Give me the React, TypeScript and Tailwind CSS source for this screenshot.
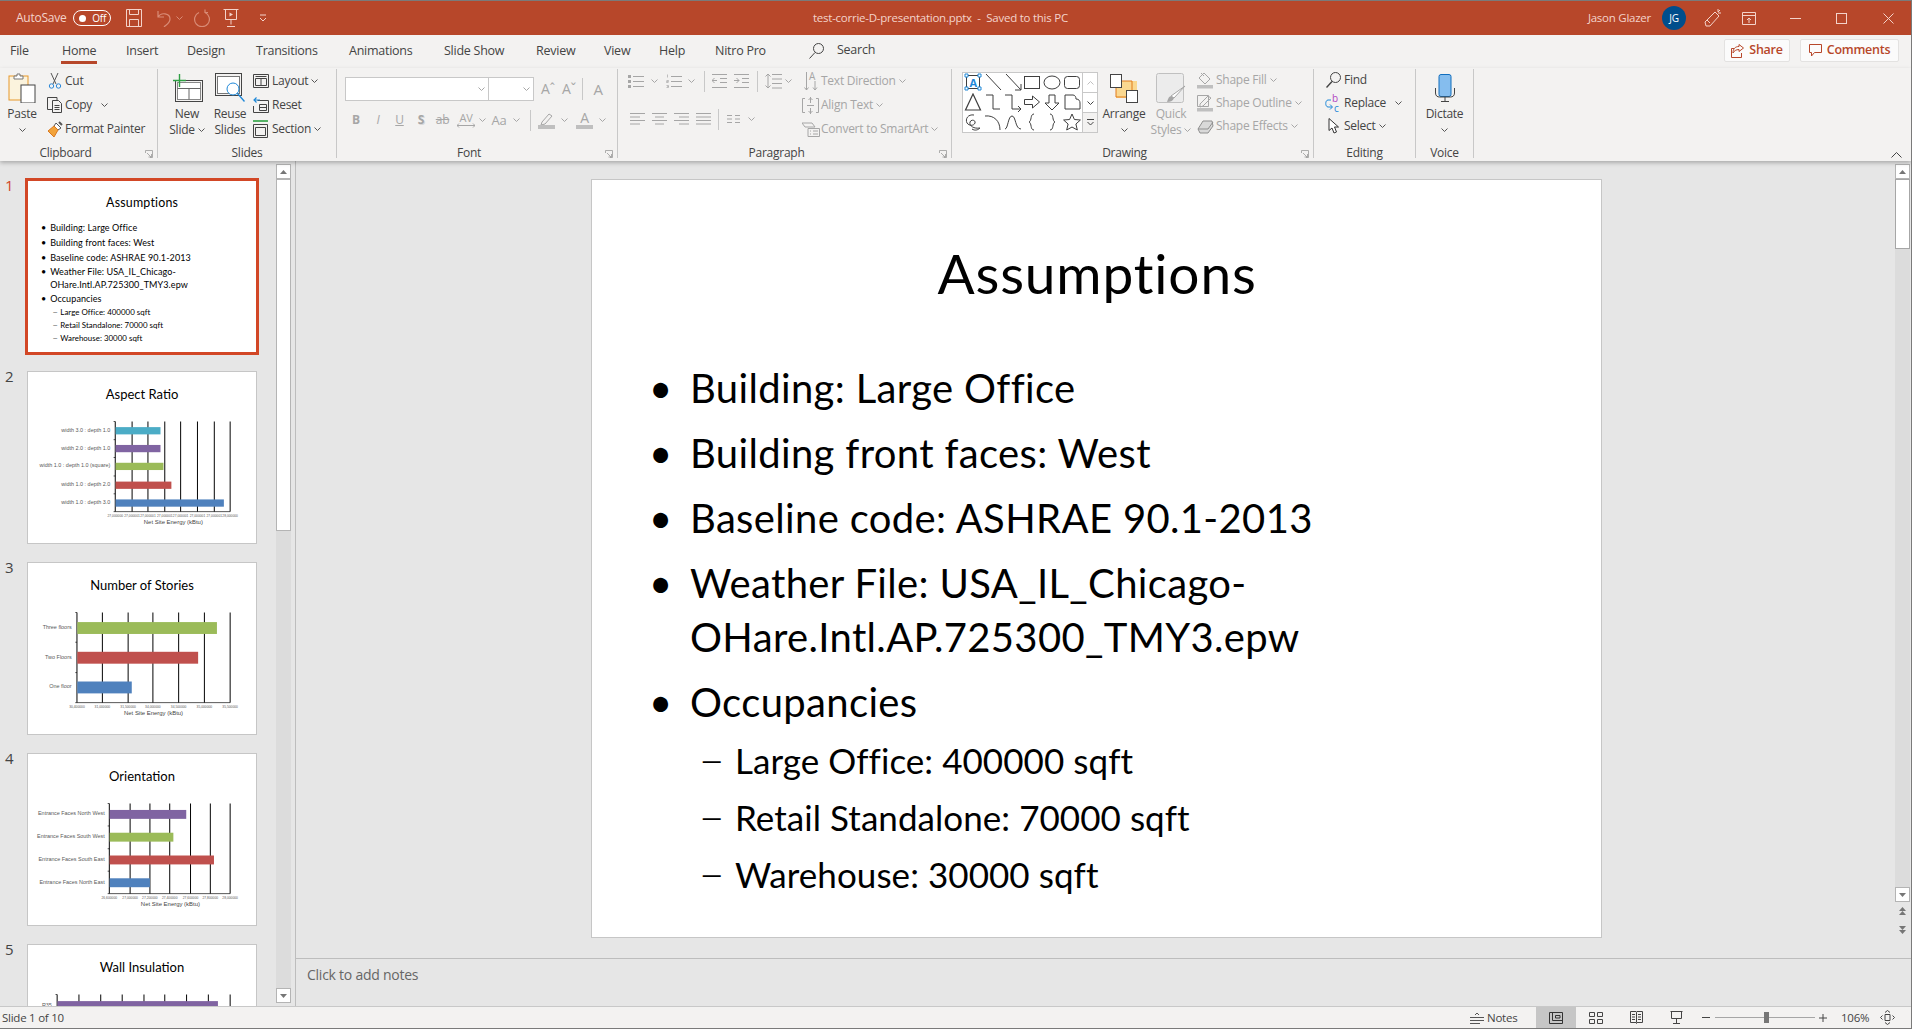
import React from 'react';

type P = { children?: React.ReactNode; className?: string };
const Ico = ({ w, h, children, className }: P & { w: number; h: number }) => (
  <svg width={w} height={h} viewBox={`0 0 ${w} ${h}`} fill="none" className={`block shrink-0 ${className ?? ''}`}>{children}</svg>
);
const D = '#a6a6a6';
const Chev = ({ c = '#555555', className }: { c?: string; className?: string }) => (
  <Ico w={7} h={4} className={className}><path d="M.5.5l3 3 3-3" stroke={c} /></Ico>
);
const Sep = ({ className }: P) => <div className={`w-px shrink-0 bg-[#c8c8c8] ${className ?? ''}`} />;

/* ---------- title bar icons ---------- */
const pale = '#f4d3ca';
const dim = '#d98c77';
const SaveIco = () => <Ico w={16} h={18}><path d="M.5.5h15v17H.5zM3.5.5v5h9v-5M3.5 17.5v-7h9v7" stroke={pale} /></Ico>;
const UndoIco = () => <Ico w={16} h={18}><path d="M3 2v6h6M3 8c3-5 12-4 12 2 0 4-4 6-6 8" stroke={dim} strokeWidth="1.2" /></Ico>;
const RedoIco = () => <Ico w={16} h={18}><path d="M5 3.5A7.4 7.4 0 1 0 11 3.5M11 .5v3h3" stroke={dim} strokeWidth="1.2" /></Ico>;
const ShowIco = () => <Ico w={16} h={18}><path d="M.5.5h15M2.5.5v10h11V.5M8 10.5v5M4 17.5h8" stroke={pale} /><path d="M6.5 3.5l3.5 2-3.5 2z" fill={pale} /></Ico>;
const QatIco = () => <Ico w={8} h={8}><path d="M1 1h6M1 4l3 3 3-3" stroke={pale} /></Ico>;
const PenIco = () => <Ico w={18} h={20}><path d="M11 4l4 4-9 10H2l-1-4zM3 12l3 3M14 1v3M17 5h-3M16 2l-2 2" stroke={pale} /></Ico>;
const DisplayIco = () => <Ico w={14} h={13}><path d="M.5.5h13v12H.5zM.5 3.5h13M7 11V6M5 8l2-2 2 2" stroke={pale} /></Ico>;

/* ---------- clipboard / slides ---------- */
const PasteIco = () => (
  <Ico w={28} h={30}>
    <rect x="1" y="3" width="19" height="24" fill="#fbf3dd" stroke="#e7982b" />
    <path d="M6 6V3h3V1h3v2h3v3z" fill="#fff" stroke="#777" />
    <rect x="13" y="12" width="14" height="18" fill="#fff" stroke="#444" />
  </Ico>
);
const CutIco = () => (
  <Ico w={14} h={16}>
    <path d="M3 0l5 11M10 0L5 11" stroke="#555" />
    <circle cx="3.5" cy="13" r="2.2" stroke="#2b88d8" /><circle cx="10.5" cy="13" r="2.2" stroke="#2b88d8" />
  </Ico>
);
const CopyIco = () => (
  <Ico w={16} h={16}>
    <path d="M10 3V.5H.5v12H5" stroke="#444" />
    <path d="M5.5 3.5h6l3 3v9h-9zM7.5 8.5h5M7.5 10.5h5M7.5 12.5h5" stroke="#444" />
  </Ico>
);
const BrushIco = () => (
  <Ico w={17} h={17}>
    <path d="M9 2l5 5-3 2-4-4z" fill="#fff" stroke="#555" />
    <path d="M12 1l3 3" stroke="#555" strokeWidth="2" />
    <path d="M7 5l4 4-4 7-6-6z" fill="#f2a33a" stroke="#d9781f" />
  </Ico>
);
const NewSlideIco = () => (
  <Ico w={31} h={28}>
    <rect x="3.5" y="6.5" width="27" height="21" stroke="#444" />
    <rect x="5.5" y="8.5" width="23" height="17" fill="#fff" stroke="#888" />
    <path d="M5.5 14.5h23M17 14.5v11" stroke="#666" />
    <path d="M7.5 0v13M1 6.5h13" stroke="#2ea043" strokeWidth="1.4" />
  </Ico>
);
const ReuseIco = () => (
  <Ico w={31} h={30}>
    <rect x=".5" y=".5" width="26" height="22" stroke="#444" />
    <rect x="2.5" y="3.5" width="22" height="17" fill="#fff" stroke="#777" />
    <circle cx="18" cy="16" r="6" fill="#fff" stroke="#1e88d8" />
    <path d="M22.5 20.5l7 8" stroke="#1e88d8" strokeWidth="1.4" />
  </Ico>
);
const LayoutIco = () => <Ico w={16} h={14}><path d="M.5.5h15v13H.5zM2.5 4.5h11v7h-11zM8 4.5v7M2.5 2.5h11" stroke="#444" /></Ico>;
const ResetIco = () => <Ico w={16} h={16}><path d="M4.5 3.5h11v12h-15V9M6.5 7.5h7v6h-7zM6 10.5h7" stroke="#444" /><path d="M7 3H1.5M3.5.5L1 3l2.5 2.5" stroke="#1e88d8" strokeWidth="1.2" /></Ico>;
const SectionIco = () => <Ico w={16} h={18}><path d="M0 1h15" stroke="#2ea043" strokeWidth="1.6" /><path d="M.5 4.5h14v13H.5zM2.5 7.5h10v8h-10z" stroke="#444" /></Ico>;

/* ---------- greyed font / paragraph ---------- */
const line = (ys: number[], x1: number, x2: number) => ys.map((y) => `M${x1} ${y}H${x2}`).join('');
const BulletIco = () => <Ico w={16} h={15}><path d={line([2.5, 7.5, 12.5], 5, 16)} stroke={D} /><path d="M0 1h3v3H0zM0 6h3v3H0zM0 11h3v3H0z" fill={D} /></Ico>;
const NumIco = () => (
  <Ico w={16} h={15}>
    <path d={line([2.5, 7.5, 12.5], 5, 16)} stroke={D} />
    <path d="M1.5 .5v3M.5 6.5h2v1h-2v1h2M.5 11.5h2v1h-1 1v1h-2" stroke={D} strokeWidth=".7" />
  </Ico>
);
const IndentDec = () => <Ico w={15} h={14}><path d="M0 .5h15M8 4.5h7M8 8.5h7M0 13.5h15M5 6.5H0M2.5 4L0 6.5 2.5 9" stroke={D} /></Ico>;
const IndentInc = () => <Ico w={15} h={14}><path d="M0 .5h15M8 4.5h7M8 8.5h7M0 13.5h15M0 6.5h5M2.5 4L5 6.5 2.5 9" stroke={D} /></Ico>;
const SpacingIco = () => <Ico w={17} h={16}><path d="M7 1.5h10M7 6h10M7 10.5h10M7 15h10M3 1v14M.5 3.5L3 1l2.5 2.5M.5 12.5L3 15l2.5-2.5" stroke={D} /></Ico>;
const AlignIco = ({ k }: { k: number }) => {
  const s = [
    'M0 1.5h15M0 5h10M0 8.5h15M0 12h10',
    'M0 1.5h15M3 5h9M0 8.5h15M3 12h9',
    'M0 1.5h15M5 5h10M0 8.5h15M5 12h10',
    'M0 1.5h15M0 5h15M0 8.5h15M0 12h15',
  ][k];
  return <Ico w={15} h={14}><path d={s} stroke={D} /></Ico>;
};
const ColsIco = () => <Ico w={13} h={10}><path d="M0 1.5h5M8 1.5h5M0 5h5M8 5h5M0 8.5h5M8 8.5h5" stroke={D} /></Ico>;
const TextDirIco = () => (
  <Ico w={14} h={20}>
    <text x="5" y="9" fontSize="10" fill={D} fontFamily="'Open Sans',sans-serif">A</text>
    <path d="M2.5 1v18M.5 16.5l2 2.5 2-2.5M11 10v9M9 16.5l2 2.5 2-2.5" stroke={D} />
  </Ico>
);
const AlignTextIco = () => <Ico w={17} h={17}><path d="M3 1.5H.5v14H3M14 1.5h2.5v14H14M8.5 0v6M6.5 3l2-2 2 2M8.5 17v-6M6.5 14l2 2 2-2M5 8.5h7" stroke={D} /></Ico>;
const SmartIco = () => <Ico w={18} h={15}><path d="M0 1h10l3 4H3zM6 6.5h11.5v8H6zM8 9h1M8 12h1M11 9h5M11 12h5" stroke={D} /></Ico>;

/* ---------- drawing ---------- */
const Shape = ({ k }: { k: number }) => {
  const st = '#3f3f3f';
  const items: React.ReactNode[] = [
    <g key="a">
      <rect x="2.5" y="2.5" width="13" height="13" stroke={st} />
      <path d="M1 1h3v3H1zM14 1h3v3h-3zM1 14h3v3H1zM14 14h3v3h-3z" fill="#fff" stroke="#1e88d8" />
      <text x="5.5" y="13.5" fontSize="11" fontWeight="700" fill="#1e88d8" fontFamily="'Open Sans',sans-serif">A</text>
    </g>,
    <path key="b" d="M2 1l15 16" stroke={st} />,
    <path key="c" d="M2 1l15 16M17 11v6h-6" stroke={st} />,
    <rect key="d" x="1.5" y="3.5" width="15" height="12" stroke={st} />,
    <ellipse key="e" cx="9" cy="9.5" rx="8" ry="6.5" stroke={st} />,
    <rect key="f" x="1.5" y="3.5" width="15" height="12" rx="3" stroke={st} />,
    <path key="g" d="M9 1L1.5 17h15z" stroke={st} strokeWidth="1.2" />,
    <path key="h" d="M2 2h7v14h7" stroke={st} />,
    <path key="i" d="M1 2h7v14h9M14 13l3 3-3 3" stroke={st} />,
    <path key="j" d="M1.5 6.5h8V3l7 6-7 6v-3.500h-8z" stroke={st} />,
    <path key="k" d="M6 2h6v8h4l-7 7-7-7h4z" stroke={st} />,
    <path key="l" d="M2 2h8c2 0 3 2 3 4 3 0 4 2 4 4v6H2z" stroke={st} />,
    <path key="m" d="M10 2C4 1 1 6 3 10c2 3 7 3 8 0 1-3-4-4-5-1-1 4 4 7 10 6-2 2-5 3-8 1" stroke={st} />,
    <path key="n" d="M1 3c9-1 15 5 15 14" stroke={st} />,
    <path key="o" d="M1 16c3 0 3-13 7-13s3 13 9 13" stroke={st} />,
    <path key="p" d="M11 1C7 1 9 8 6 9c3 1 1 8 5 8" stroke={st} />,
    <path key="q" d="M7 1c4 0 2 7 5 8-3 1-1 8-5 8" stroke={st} />,
    <path key="r" d="M9 1l2.400 5.500 6 .5-4.500 4 1.400 6L9 14l-5.300 3 1.400-6L.6 7l6-.5z" stroke={st} />,
  ];
  return <div className="flex items-center justify-center"><Ico w={18} h={19}>{items[k]}</Ico></div>;
};
const ArrangeIco = () => (
  <Ico w={29} h={29}>
    <path d="M6 7h21v17H6z" fill="#fad890" />
    <path d="M6 7h16v16" stroke="#e07b1a" />
    <path d="M6 7v16h16" stroke="#e07b1a" />
    <rect x=".5" y=".5" width="11" height="13" fill="#fff" stroke="#444" />
    <rect x="16.500" y="16.500" width="11" height="12" fill="#fff" stroke="#444" />
  </Ico>
);
const QuickIco = () => (
  <Ico w={30} h={31}>
    <rect x=".5" y=".5" width="27" height="29" rx="2" fill="#ececec" stroke="#c0c0c0" />
    <path d="M29 13L18 25l-3-2z" fill="#fff" stroke={D} />
    <path d="M15 23l3 2c-1 3-4 4-7 4 1-2 1-5 4-6z" fill={D} />
  </Ico>
);
const FillIco = () => <Ico w={17} h={17}><path d="M7 1l6 6-5 5-6-6zM4 1l3 3" stroke={D} /><path d="M0 13h16v3.500H0z" fill="#bfbfbf" /></Ico>;
const OutlineIco = () => <Ico w={17} h={17}><path d="M.5.5h11v11H.5zM3 9l8-8 3 2-8 8-3 1z" stroke={D} /><path d="M0 13h16v3.500H0z" fill="#bfbfbf" /></Ico>;
const EffectIco = () => <Ico w={17} h={15}><path d="M1 10l5-8h9l1 5-5 7H3z" fill="#d9d9d9" stroke="#8f8f8f" /><path d="M1 10h10l5-7" stroke="#8f8f8f" /></Ico>;

/* ---------- editing / voice ---------- */
const FindIco = () => <Ico w={15} h={16}><circle cx="9.500" cy="5.500" r="5" stroke="#444" /><path d="M6 9.500L.5 15.500" stroke="#444" strokeWidth="1.4" /></Ico>;
const ReplaceIco = () => (
  <Ico w={16} h={19}>
    <text x="7" y="8" fontSize="10" fill="#b146c2" fontFamily="'Open Sans',sans-serif">b</text>
    <text x="9" y="18" fontSize="10" fill="#1e88d8" fontFamily="'Open Sans',sans-serif">c</text>
    <path d="M6 6H3C0 6 0 13 3 13h4M5 10.500L7.500 13 5 15.500" stroke="#1e88d8" />
  </Ico>
);
const SelectIco = () => <Ico w={11} h={16}><path d="M1 .5v12l3-2.500 2 5 2.500-1-2-5h4z" fill="#fff" stroke="#333" /></Ico>;
const MicIco = () => (
  <Ico w={20} h={28}>
    <rect x="4" y=".5" width="12" height="22" rx="2" fill="#85bdee" stroke="#106ebe" />
    <path d="M.5 14v5c0 3 2 4 4 4h11c2 0 4-1 4-4v-5M10 23v4M6 27.500h8" stroke="#444" />
  </Ico>
);
const ShareIco = () => <Ico w={13} h={14}><path d="M8 .5l4.500 3.500L8 7.500V5.500C5 5.500 3 7 2 9 2 5 4 2.500 8 2.500zM10.500 9v4.500H.5v-9H3" stroke="#b7472a" /></Ico>;
const CommentIco = () => <Ico w={13} h={13}><path d="M.5.5h12v8H5.500L2.500 12V8.500h-2z" stroke="#b7472a" /></Ico>;
const SearchIco = () => <Ico w={15} h={16}><circle cx="9.500" cy="5.500" r="5" stroke="#444" /><path d="M6 9.500L.5 15.500" stroke="#444" /></Ico>;

/* ---------- ribbon pieces ---------- */
const Small = ({ icon, label, chev, off, iconW = 'w-[18px]', gap = 'ml-[1px]', h = 'h-[24px]', chevClass = 'ml-[3px]' }: {
  icon: React.ReactNode; label: string; chev?: boolean; off?: boolean; iconW?: string; gap?: string; h?: string; chevClass?: string;
}) => (
  <div className={`flex items-center ${h}`}>
    <div className={`flex justify-center shrink-0 ${iconW}`}>{icon}</div>
    <span className={`${gap} whitespace-nowrap ${off ? 'text-[#a6a6a6]' : 'text-[#444444]'}`}>{label}</span>
    {chev && <Chev c={off ? D : '#555555'} className={chevClass} />}
  </div>
);
const Large = ({ icon, l1, l2, w, off }: { icon: React.ReactNode; l1: string; l2?: string; w: string; off?: boolean }) => (
  <div className={`flex flex-col items-center shrink-0 mt-[1px] ${w} ${off ? 'text-[#a6a6a6]' : 'text-[#444444]'}`}>
    <div className="h-[36px] flex items-center justify-center">{icon}</div>
    <div className="leading-[16px] whitespace-nowrap">{l1}</div>
    <div className="leading-[16px] h-[16px] flex items-center gap-[3px] whitespace-nowrap">
      {l2}<Chev c={off ? D : '#555555'} />
    </div>
  </div>
);
const Launcher = () => (
  <Ico w={8} h={8} className="absolute right-[4px] bottom-0"><path d="M.5 3V.5H7.500V7.500H5M2 3l4 4M3.500 7H6.500V4" stroke="#9a9a9a" strokeWidth=".8" /></Ico>
);
const Group = ({ w, label, pr = '', launcher, children }: P & { w: string; label: string; pr?: string; launcher?: boolean }) => (
  <div className={`relative h-[89px] mt-[1px] border-r border-[#c8c8c8] shrink-0 flex flex-col ${w}`}>
    <div className="h-[76px] shrink-0 flex">{children}</div>
    <div className={`h-[16px] shrink-0 leading-[16px] text-center text-[#444444] ${pr}`}>{label}</div>
    {launcher && <Launcher />}
  </div>
);
const Glyph = ({ children, w, className }: P & { w: string }) => (
  <div className={`${w} shrink-0 text-center text-[#a6a6a6] leading-[20px] ${className ?? ''}`}>{children}</div>
);

/* ---------- slide 1 (main view and its thumbnail share one drawing) ---------- */
const B = ({ children, className = 'leading-[52px] mt-[13px]' }: P) => (
  <div className={`flex text-[40px] tracking-[0.35px] ${className}`}>
    <span className="w-[98px] pl-[57px] shrink-0">•</span><div>{children}</div>
  </div>
);
const Sub = ({ children, mt }: P & { mt: string }) => (
  <div className={`flex items-center leading-[44px] text-[35px] tracking-[0.05px] ml-[109px] ${mt}`}>
    <span className="w-[34px] shrink-0 text-[27px]">—</span><div>{children}</div>
  </div>
);
const SlideOne = () => (
  <div className="w-[1009px] h-[757px] bg-white text-black font-['Lato',sans-serif] overflow-hidden">
    <div className="text-center text-[55px] leading-[64px] tracking-[0.85px] pt-[61px] h-[169px] pl-[1px]">Assumptions</div>
    <B>Building: Large Office</B>
    <B>Building front faces: West</B>
    <B>Baseline code: ASHRAE 90.1-2013</B>
    <B className="leading-[54px] mt-[12px]">Weather File: USA_IL_Chicago-<br />OHare.Intl.AP.725300_TMY3.epw</B>
    <B className="leading-[52px] mt-[12px]">Occupancies</B>
    <Sub mt="mt-[10px]">Large Office: 400000 sqft</Sub>
    <Sub mt="mt-[13px]">Retail Standalone: 70000 sqft</Sub>
    <Sub mt="mt-[13px]">Warehouse: 30000 sqft</Sub>
  </div>
);

/* ---------- charts ---------- */
type Bar = { y: number; h: number; x2: number; c: string; label: string };
const Chart = ({ x0, grid, bars, ticks, nameX, bottom = 423, labelX, yticks }: {
  x0: number; grid: number[]; bars: Bar[]; ticks: string[]; nameX: number; bottom?: number; labelX: number; yticks: number[];
}) => (
  <svg viewBox="0 100 690 418" className="w-[228px] h-[138px] block" fontFamily="'Liberation Sans',sans-serif">
    {grid.map((x) => <line key={x} x1={x} x2={x} y1={150} y2={bottom} stroke="#000" strokeWidth="3" />)}
    <line x1={x0} x2={612} y1={bottom} y2={bottom} stroke="#000" strokeWidth="2" />
    {yticks.map((y) => <line key={y} x1={x0 - 5} x2={x0} y1={y} y2={y} stroke="#000" strokeWidth="2" />)}
    {bars.map((b) => (
      <g key={b.label}>
        <rect x={x0 + 1} y={b.y - b.h / 2} width={b.x2 - x0 - 1} height={b.h} fill={b.c} />
        <text x={labelX} y={b.y + 3} textAnchor="end" fontSize="16.5" fill="#595959" letterSpacing="0">{b.label}</text>
      </g>
    ))}
    {ticks.map((t, i) => <text key={i} x={grid[i] ?? x0} y={bottom + 17} textAnchor="middle" fontSize="10" fill="#595959" letterSpacing="0">{t}</text>)}
    <text x={nameX} y={bottom + 38} textAnchor="middle" fontSize="18" fill="#444" letterSpacing="0">Net Site Energy (kBtu)</text>
  </svg>
);
const blue = '#4f81bd', red = '#c0504d', green = '#9bbb59', purple = '#8064a2', teal = '#4bacc6';

const Thumb = ({ n, title, children, active }: P & { n: number; title?: string; active?: boolean }) => (
  <div className="flex h-[191px] pl-[5px] shrink-0">
    <div className={`w-[22px] text-[15px] leading-[15px] -mt-[2px] ${active ? 'text-[#d24726]' : 'text-[#444444]'}`}>{n}</div>
    <div className={`w-[230px] h-[173px] bg-white overflow-hidden border ${active ? 'border-[#d24726] ring-2 ring-[#d24726]' : 'border-[#c6c6c6]'}`}>
      {title && <div className="h-[33px] pt-[10px] text-center text-black text-[13px] tracking-normal leading-[24px] font-['Lato',sans-serif]">{title}</div>}
      {children}
    </div>
  </div>
);

const Tri = ({ up }: { up?: boolean }) => (
  <Ico w={7} h={4}><path d={up ? 'M3.500 0L7 4H0z' : 'M0 0h7L3.500 4z'} fill="#767676" /></Ico>
);
const ScrollBtn = ({ up }: { up?: boolean }) => (
  <div className="h-[15px] bg-white border border-[#b4b4b4] flex items-center justify-center shrink-0"><Tri up={up} /></div>
);

const tabs: [string, string][] = [
  ['File', 'w-[51px]'], ['Home', 'w-[65px]'], ['Insert', 'w-[61px]'], ['Design', 'w-[69px]'],
  ['Transitions', 'w-[93px]'], ['Animations', 'w-[95px]'], ['Slide Show', 'w-[92px]'], ['Review', 'w-[68px]'],
  ['View', 'w-[55px]'], ['Help', 'w-[56px]'], ['Nitro Pro', 'w-[94px]'],
];

export default function App() {
  return (
    <div className="w-[1912px] h-[1029px] flex flex-col overflow-hidden border-r border-[#7a7a7a] bg-[#e6e6e6] text-[12px] text-[#444444] font-['Open_Sans',sans-serif] tracking-[-0.25px]">
      {/* title bar */}
      <div className="h-[35px] shrink-0 bg-[#b7472a] border-t border-[#7a7a7a] flex items-center text-[#f4d3ca] text-[11.5px]">
        <div className="w-[813px] shrink-0 flex items-center pl-[16px]">
          <span className="w-[57px] text-[12px]">AutoSave</span>
          <div className="w-[38px] h-[16px] rounded-full border border-white flex items-center justify-between pl-[5px] pr-[4px]">
            <span className="w-[7px] h-[7px] rounded-full bg-white" />
            <span className="text-white text-[10px] leading-none">Off</span>
          </div>
          <div className="ml-[15px]"><SaveIco /></div>
          <div className="ml-[13px]"><UndoIco /></div>
          <Chev c={dim} className="ml-[5px]" />
          <div className="ml-[11px]"><RedoIco /></div>
          <div className="ml-[13px]"><ShowIco /></div>
          <div className="ml-[20px]"><QatIco /></div>
        </div>
        <div className="flex-1 whitespace-nowrap">test-corrie-D-presentation.pptx&nbsp; -&nbsp; Saved to this PC</div>
        <div className="flex items-center pr-[17px]">
          <span className="whitespace-nowrap">Jason Glazer</span>
          <div className="ml-[11px] w-[24px] h-[24px] rounded-full bg-[#004e8c] text-white text-[10px] flex items-center justify-center">JG</div>
          <div className="ml-[18px]"><PenIco /></div>
          <div className="ml-[20px]"><DisplayIco /></div>
          <div className="ml-[34px] w-[11px] h-px bg-[#f4d3ca]" />
          <div className="ml-[35px] w-[11px] h-[11px] border border-[#f4d3ca]" />
          <Ico w={11} h={11} className="ml-[36px]"><path d="M.5.5l10 10M10.500.5l-10 10" stroke={pale} /></Ico>
        </div>
      </div>

      {/* tabs */}
      <div className="h-[33px] shrink-0 bg-[#f3f2f1] flex pl-[10px] text-[12.5px]">
        {tabs.map(([t, w]) => (
          <div key={t} className={`${w} shrink-0 pt-[7px]`}>
            <span className={`inline-block leading-[16px] whitespace-nowrap ${t === 'Home' ? 'pb-[2px] px-[1px] border-b-[3px] border-[#b7472a]' : ''}`}>{t}</span>
          </div>
        ))}
        <div className="w-[28px] pt-[8px]"><SearchIco /></div>
        <div className="pt-[7px] leading-[16px]">Search</div>
        <div className="ml-auto mr-[12px] mt-[4px] flex gap-[10px] h-[23px] text-[#b7472a] font-semibold">
          <div className="w-[66px] bg-[#fbfbfb] border border-[#e3e2e1] rounded-[2px] flex items-center justify-center gap-[5px]"><ShareIco />Share</div>
          <div className="w-[99px] bg-[#fbfbfb] border border-[#e3e2e1] rounded-[2px] flex items-center justify-center gap-[5px]"><CommentIco />Comments</div>
        </div>
      </div>

      {/* ribbon */}
      <div className="relative z-10 h-[93px] shrink-0 bg-[#f3f2f1] flex shadow-[0_2px_4px_rgba(0,0,0,0.25)]">
        <Group w="w-[158px]" label="Clipboard" pr="pr-[26px]" launcher>
          <div className="w-[46px] shrink-0 pl-[4px]">
            <Large w="w-[36px]" icon={<PasteIco />} l1="Paste" l2="" />
          </div>
          <div>
            <Small icon={<CutIco />} label="Cut" />
            <Small icon={<CopyIco />} label="Copy" chev chevClass="ml-[9px]" />
            <Small icon={<BrushIco />} label="Format Painter" />
          </div>
        </Group>
        <Group w="w-[179px]" label="Slides">
          <div className="flex w-[94px] shrink-0 pl-[10px] gap-[4px]">
            <Large w="w-[38px]" icon={<NewSlideIco />} l1="New" l2="Slide" />
            <div className="flex flex-col items-center w-[40px] mt-[1px] text-[#444444]">
              <div className="h-[36px] flex items-center"><ReuseIco /></div>
              <div className="leading-[16px]">Reuse</div>
              <div className="leading-[16px]">Slides</div>
            </div>
          </div>
          <div>
            <Small icon={<LayoutIco />} label="Layout" gap="ml-[2px]" chev />
            <Small icon={<ResetIco />} label="Reset" gap="ml-[2px]" />
            <Small icon={<SectionIco />} label="Section" gap="ml-[2px]" chev />
          </div>
        </Group>
        <Group w="w-[281px]" label="Font" pr="pr-[16px]" launcher>
          <div className="pl-[8px] flex flex-col">
            <div className="flex items-center h-[24px] mt-[8px]">
              <div className="w-[144px] h-[24px] bg-white border border-[#c8c8c8] flex items-center justify-end pr-[3px]"><Chev c={D} /></div>
              <div className="w-[46px] h-[24px] -ml-px bg-white border border-[#c8c8c8] flex items-center justify-end pr-[3px]"><Chev c={D} /></div>
              <Glyph w="w-[16px]" className="ml-[6px] text-[14px]">Aˆ</Glyph>
              <Glyph w="w-[16px]" className="ml-[5px] text-[14px]">Aˇ</Glyph>
              <Sep className="h-[22px] ml-[5px]" />
              <Glyph w="w-[18px]" className="ml-[6px] text-[15px]">A</Glyph>
            </div>
            <div className="flex items-center h-[22px] mt-[8px]">
              <Glyph w="w-[22px]" className="font-bold">B</Glyph>
              <Glyph w="w-[22px]" className="italic">I</Glyph>
              <Glyph w="w-[21px]" className="underline">U</Glyph>
              <Glyph w="w-[22px]" className="font-bold [text-shadow:1px_1px_#d9d9d9]">S</Glyph>
              <Glyph w="w-[21px]" className="line-through">ab</Glyph>
              <div className="w-[26px] shrink-0 flex flex-col items-center text-[#a6a6a6] text-[11px] leading-[11px]">
                AV
                <Ico w={18} h={5}><path d="M0 2.500h18M2 .5L0 2.500l2 2M16 .5l2 2-2 2" stroke={D} /></Ico>
              </div>
              <Chev c={D} />
              <Glyph w="w-[20px]" className="ml-[3px] text-[13px]">Aa</Glyph>
              <Chev c={D} className="ml-[4px]" />
              <Sep className="h-[21px] ml-[10px]" />
              <Ico w={17} h={17} className="ml-[7px]"><path d="M4 10l7-8 3 2-7 8-4 1z" stroke={D} /><path d="M0 13h17v4H0z" fill="#bfbfbf" /></Ico>
              <Chev c={D} className="ml-[6px]" />
              <div className="w-[17px] ml-[8px] text-center text-[#a6a6a6] text-[14px] leading-[14px] border-b-[4px] border-[#bfbfbf]">A</div>
              <Chev c={D} className="ml-[6px]" />
            </div>
          </div>
        </Group>
        <Group w="w-[334px]" label="Paragraph" pr="pr-[16px]" launcher>
          <div className="w-[183px] shrink-0 pl-[10px] flex flex-col">
            <div className="flex items-center h-[24px]">
              <BulletIco /><Chev c={D} className="ml-[7px]" />
              <div className="ml-[8px]"><NumIco /></div><Chev c={D} className="ml-[6px]" />
              <Sep className="h-[21px] ml-[9px]" />
              <div className="ml-[7px]"><IndentDec /></div>
              <div className="ml-[7px]"><IndentInc /></div>
              <Sep className="h-[21px] ml-[8px]" />
              <div className="ml-[7px]"><SpacingIco /></div><Chev c={D} className="ml-[3px]" />
            </div>
            <div className="flex items-center h-[22px] mt-[15px] pl-[2px] gap-[7px]">
              <AlignIco k={0} /><AlignIco k={1} /><AlignIco k={2} /><AlignIco k={3} />
              <Sep className="h-[21px]" />
              <div className="ml-[1px]"><ColsIco /></div>
              <Chev c={D} className="ml-[1px]" />
            </div>
          </div>
          <div>
            <Small off icon={<TextDirIco />} label="Text Direction" chev iconW="w-[19px]" />
            <Small off icon={<AlignTextIco />} label="Align Text" chev iconW="w-[19px]" />
            <Small off icon={<SmartIco />} label="Convert to SmartArt" chev iconW="w-[19px]" />
          </div>
        </Group>
        <Group w="w-[362px]" label="Drawing" pr="pr-[16px]" launcher>
          <div className="ml-[10px] mt-[3px] h-[61px] w-[136px] shrink-0 flex border border-[#c8c8c8] bg-white">
            <div className="w-[120px] grid grid-cols-6 grid-rows-3">
              {Array.from({ length: 18 }, (_, i) => <Shape key={i} k={i} />)}
            </div>
            <div className="w-[15px] flex flex-col border-l border-[#c8c8c8] bg-[#f3f2f1]">
              <div className="h-[20px] flex items-center justify-center bg-white border-b border-[#c8c8c8]"><Chev c="#c0c0c0" className="rotate-180" /></div>
              <div className="h-[20px] flex items-center justify-center bg-white border-b border-[#c8c8c8]"><Chev c="#444" /></div>
              <div className="flex-1 flex items-center justify-center"><Ico w={7} h={7}><path d="M0 .5h7M.5 3l3 3 3-3" stroke="#444" /></Ico></div>
            </div>
          </div>
          <Large w="w-[44px] ml-[4px]" icon={<ArrangeIco />} l1="Arrange" l2="" />
          <Large w="w-[40px] ml-[5px]" off icon={<QuickIco />} l1="Quick" l2="Styles" />
          <div className="ml-[6px] -mt-[1px] pt-[0.5px]">
            <Small off h="h-[23px]" icon={<FillIco />} label="Shape Fill" chev iconW="w-[17px]" gap="ml-[2px]" />
            <Small off h="h-[23px]" icon={<OutlineIco />} label="Shape Outline" chev iconW="w-[17px]" gap="ml-[2px]" />
            <Small off h="h-[23px]" icon={<EffectIco />} label="Shape Effects" chev iconW="w-[17px]" gap="ml-[2px]" />
          </div>
        </Group>
        <Group w="w-[102px]" label="Editing">
          <div className="pl-[11px] -mt-[1px] pt-[0.5px]">
            <Small h="h-[23px]" icon={<FindIco />} label="Find" iconW="w-[16px]" gap="ml-[3px]" />
            <Small h="h-[23px]" icon={<ReplaceIco />} label="Replace" chev chevClass="ml-[9px]" iconW="w-[16px]" gap="ml-[3px]" />
            <Small h="h-[23px]" icon={<SelectIco />} label="Select" chev iconW="w-[16px]" gap="ml-[3px]" />
          </div>
        </Group>
        <Group w="w-[58px]" label="Voice">
          <div className="w-full flex justify-center">
            <Large w="w-[50px]" icon={<MicIco />} l1="Dictate" l2="" />
          </div>
        </Group>
        <Ico w={11} h={6} className="absolute right-[9px] bottom-[3px]"><path d="M.5 5.500l5-5 5 5" stroke="#444" /></Ico>
      </div>

      {/* main */}
      <div className="h-[845px] shrink-0 flex overflow-hidden">
        <div className="w-[296px] shrink-0 flex border-r border-[#bdbdbd]">
          <div className="w-[276px] shrink-0 pt-[19px] flex flex-col overflow-hidden">
            <Thumb n={1} active>
              <div className="w-[228px] h-[171px] overflow-hidden">
                <div className="scale-[0.226] origin-top-left w-[1009px] h-[757px]"><SlideOne /></div>
              </div>
            </Thumb>
            <Thumb n={2} title="Aspect Ratio">
              <Chart x0={264} labelX={249} nameX={440} grid={[264, 315, 363, 414, 462, 513, 564, 612]} yticks={[150, 205, 259, 315, 369, 423]}
                ticks={['27,000000', '27,000001', '27,000001', '27,000001', '27,000001', '27,000001', '27,000001', '28,000000']}
                bars={[
                  { y: 178, h: 22, x2: 401, c: teal, label: 'width 3.0 : depth 1.0' },
                  { y: 232, h: 22, x2: 401, c: purple, label: 'width 2.0 : depth 1.0' },
                  { y: 286, h: 22, x2: 410, c: green, label: 'width 1.0 : depth 1.0 (square)' },
                  { y: 343, h: 22, x2: 434, c: red, label: 'width 1.0 : depth 2.0' },
                  { y: 397, h: 22, x2: 593, c: blue, label: 'width 1.0 : depth 3.0' },
                ]} />
            </Thumb>
            <Thumb n={3} title="Number of Stories">
              <Chart x0={148} labelX={132} nameX={380} grid={[148, 225, 303, 378, 456, 534, 612]} yticks={[150, 240, 332, 423]}
                ticks={['30,400000', '31,000000', '31,500000', '34,000000', '34,500000', '35,000000', '35,500000']}
                bars={[
                  { y: 197, h: 36, x2: 572, c: green, label: 'Three floors' },
                  { y: 287, h: 36, x2: 515, c: red, label: 'Two Floors' },
                  { y: 377, h: 36, x2: 314, c: blue, label: 'One floor' },
                ]} />
            </Thumb>
            <Thumb n={4} title="Orientation">
              <Chart x0={246} labelX={232} nameX={431} grid={[246, 309, 369, 429, 492, 552, 612]} yticks={[150, 218, 287, 355, 423]}
                ticks={['26,600000', '27,000000', '27,200000', '27,400000', '27,600000', '27,800000', '28,000000']}
                bars={[
                  { y: 183, h: 27, x2: 479, c: purple, label: 'Entrance Faces North West' },
                  { y: 252, h: 27, x2: 440, c: green, label: 'Entrance Faces South West' },
                  { y: 321, h: 27, x2: 563, c: red, label: 'Entrance Faces South East' },
                  { y: 390, h: 27, x2: 369, c: blue, label: 'Entrance Faces North East' },
                ]} />
            </Thumb>
            <Thumb n={5} title="Wall Insulation">
              <Chart x0={88} labelX={72} nameX={350} grid={[88, 154, 220, 285, 351, 414, 480, 546, 612]} yticks={[150]} ticks={[]}
                bars={[{ y: 185, h: 30, x2: 575, c: purple, label: 'R35' }]} />
            </Thumb>
          </div>
          <div className="w-[15px] shrink-0 mt-[3px] mb-[3px] flex flex-col bg-[#dcdcdc]">
            <ScrollBtn up />
            <div className="h-[352px] bg-white border border-[#b4b4b4] shrink-0" />
            <div className="flex-1" />
            <ScrollBtn />
          </div>
        </div>

        <div className="flex-1 flex flex-col min-w-0">
          <div className="h-[797px] shrink-0 flex">
            <div className="ml-[295px] mt-[18px] w-[1011px] h-[759px] border border-[#c6c6c6] bg-white shrink-0"><SlideOne /></div>
            <div className="ml-auto w-[15px] mr-[1px] mt-[3px] flex flex-col h-[770px]">
              <ScrollBtn up />
              <div className="h-[70px] bg-white border border-[#a6a6a6] shrink-0" />
              <div className="flex-1 bg-[#dcdcdc]" />
              <ScrollBtn />
              <div className="flex flex-col items-center gap-[11px] mt-[5px]">
                <Ico w={7} h={8}><path d="M.5 0h6M3.500 0L7 4H0zM3.500 4L7 8H0z" fill="#767676" /></Ico>
                <Ico w={7} h={8}><path d="M0 0h7L3.500 4zM0 4h7L3.500 8z" fill="#767676" /></Ico>
              </div>
            </div>
          </div>
          <div className="flex-1 border-t border-[#bdbdbd] pl-[11px] pt-[6px] text-[14px] leading-[19px] text-[#666666]">Click to add notes</div>
        </div>
      </div>

      {/* status bar */}
      <div className="h-[23px] shrink-0 bg-[#f3f2f1] border-t border-[#c8c8c8] border-b border-b-[#7a7a7a] flex items-center text-[11.5px] relative z-10">
        <span className="ml-[2px]">Slide 1 of 10</span>
        <div className="ml-auto flex items-center h-full pr-[16px]">
          <Ico w={14} h={12}><path d="M0 5.500h14M0 8.500h14M0 11.500h10M5 3l2-2 2 2" stroke="#555" /></Ico>
          <span className="ml-[3px] w-[33px]">Notes</span>
          <div className="ml-[16px] w-[40px] h-full bg-[#c6c6c6] flex items-center justify-center">
            <Ico w={14} h={12}><path d="M.5.5h13v11H.5zM3.500.5v8h10M6.500 3.500h4.500v2.500H6.500z" stroke="#333" /></Ico>
          </div>
          <div className="w-[40px] flex justify-center"><Ico w={14} h={12}><path d="M.5.5h5v4h-5zM8.500.5h5v4h-5zM.5 7.500h5v4h-5zM8.500 7.500h5v4h-5z" stroke="#444" /></Ico></div>
          <div className="w-[40px] flex justify-center"><Ico w={13} h={13}><path d="M.5.5h5.500l.5 1 .5-1h5.500v11H7l-.5 1-.5-1H.5zM6.500 1.500v10M2 3.500h3M2 6h3M2 8.500h3M8 3.500h3M8 6h3M8 8.500h3" stroke="#444" /></Ico></div>
          <div className="w-[40px] flex justify-center"><Ico w={13} h={13}><path d="M.5.5h12M1.500.5v7h10v-7M6.500 7.500v4.500M3 12.500h7" stroke="#444" /></Ico></div>
          <div className="ml-[6px] w-[8px] h-px bg-[#444444]" />
          <div className="ml-[5px] w-[100px] h-px bg-[#a6a6a6] relative">
            <div className="absolute left-[49px] -top-[5px] w-[5px] h-[11px] bg-[#767676]" />
          </div>
          <Ico w={8} h={8} className="ml-[4px]"><path d="M0 4h8M4 0v8" stroke="#444" /></Ico>
          <span className="ml-[14px] w-[26px] whitespace-nowrap">106%</span>
          <Ico w={15} h={15} className="ml-[13px]"><path d="M5 4.500h5v6H5zM5 2.500l2.500-2 2.500 2M5 12.500l2.500 2 2.500-2M2.500 5.500l-2 2 2 2M12.500 5.500l2 2-2 2" stroke="#444" /></Ico>
        </div>
      </div>
    </div>
  );
}
